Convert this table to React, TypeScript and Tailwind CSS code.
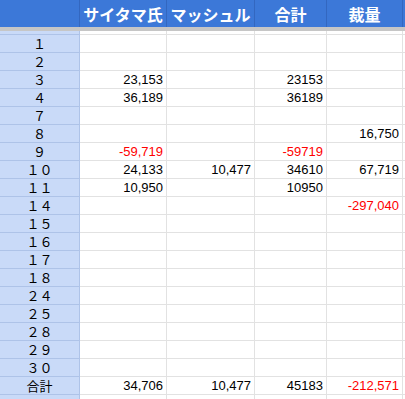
import React from 'react';

type Cell = { v: string; red?: boolean };

const rows: { label: string; cells: (Cell | null)[] }[] = [
  { label: '１', cells: [null, null, null, null] },
  { label: '２', cells: [null, null, null, null] },
  { label: '３', cells: [{ v: '23,153' }, null, { v: '23153' }, null] },
  { label: '４', cells: [{ v: '36,189' }, null, { v: '36189' }, null] },
  { label: '７', cells: [null, null, null, null] },
  { label: '８', cells: [null, null, null, { v: '16,750' }] },
  { label: '９', cells: [{ v: '-59,719', red: true }, null, { v: '-59719', red: true }, null] },
  { label: '１０', cells: [{ v: '24,133' }, { v: '10,477' }, { v: '34610' }, { v: '67,719' }] },
  { label: '１１', cells: [{ v: '10,950' }, null, { v: '10950' }, null] },
  { label: '１４', cells: [null, null, null, { v: '-297,040', red: true }] },
  { label: '１５', cells: [null, null, null, null] },
  { label: '１６', cells: [null, null, null, null] },
  { label: '１７', cells: [null, null, null, null] },
  { label: '１８', cells: [null, null, null, null] },
  { label: '２４', cells: [null, null, null, null] },
  { label: '２５', cells: [null, null, null, null] },
  { label: '２８', cells: [null, null, null, null] },
  { label: '２９', cells: [null, null, null, null] },
  { label: '３０', cells: [null, null, null, null] },
  { label: '合計', cells: [{ v: '34,706' }, { v: '10,477' }, { v: '45183' }, { v: '-212,571', red: true }] },
  { label: '', cells: [null, null, null, null] },
];

const headers = ['サイタマ氏', 'マッシュル', '合計', '裁量'];
const grid = 'grid grid-cols-[80px_87px_88px_72px_76px_2px]';

export default function App() {
  return (
    <div className="w-[405px] h-[399px] overflow-hidden bg-white">
      {/* column headers */}
      <div className={`${grid} h-[27px] bg-[#3c78d8]`}>
        <div className="border-r border-[#3367c0]" />
        {headers.map((h) => (
          <div
            key={h}
            className="flex items-center justify-center border-r border-[#3367c0] text-white font-bold text-[16px] whitespace-nowrap overflow-visible"
            style={{ fontFamily: '"Noto Sans CJK JP", sans-serif' }}
          >
            {h}
          </div>
        ))}
        <div />
      </div>
      {/* frozen divider */}
      <div className="h-[4px] bg-[#c6c6c6]" />
      <div className={`${grid} h-[4px]`}>
        <div className="bg-[#c9daf8] border-r border-b border-[#aec3e8]" />
        {[0, 1, 2, 3].map((i) => (
          <div key={i} className="border-r border-b border-[#e2e2e2]" />
        ))}
        <div className="border-b border-[#e2e2e2]" />
      </div>
      {rows.map((r, ri) => (
        <div key={ri} className={`${grid} h-[18px]`}>
          <div
            className="flex items-center justify-center bg-[#c9daf8] border-r border-b border-[#aec3e8] text-[13px] text-black leading-none"
            style={{ fontFamily: '"Noto Sans CJK JP", sans-serif' }}
          >
            {r.label}
          </div>
          {r.cells.map((c, ci) => (
            <div
              key={ci}
              className={`flex items-center justify-end pr-[3px] border-r border-b border-[#e2e2e2] text-[13px] leading-none ${
                c?.red ? 'text-[#ff0000]' : 'text-black'
              }`}
              style={{ fontFamily: '"Liberation Sans", Arial, sans-serif' }}
            >
              {c?.v}
            </div>
          ))}
          <div className="border-b border-[#e2e2e2]" />
        </div>
      ))}
    </div>
  );
}
